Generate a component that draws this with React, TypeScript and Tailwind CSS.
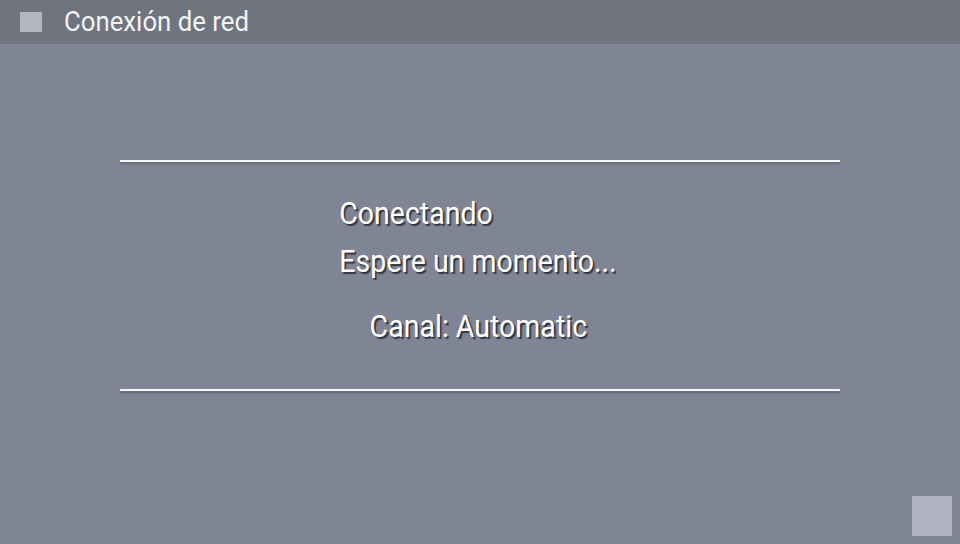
import React from 'react';

const shadow = { textShadow: '2px 2px 1px rgba(0,0,0,0.6)' };

function Rule() {
  return <div className="h-[2px] w-[720px] bg-[#f4f5f7] shadow-[0_2px_2px_rgba(0,0,0,0.25)]" />;
}

export default function App() {
  return (
    <div className="flex h-[544px] w-[960px] flex-col overflow-hidden bg-[#7f8595] font-['Roboto',sans-serif] text-white">
      <div className="flex h-[44px] shrink-0 items-center bg-[#6f747f] pl-5">
        <div className="h-5 w-[22px] bg-[#b4b7c0]" />
        <span className="ml-[22px] origin-left scale-x-[0.92] text-[28px] leading-none text-[#f2f3f5]">Conexión de red</span>
      </div>
      <div className="relative flex flex-1 flex-col items-center pt-[116px]">
        <Rule />
        <div className="mt-[28px] flex scale-x-[0.92] flex-col items-start pr-1 text-[31px] leading-[48px]" style={shadow}>
          <span>Conectando</span>
          <span>Espere un momento...</span>
        </div>
        <div className="mt-[17px] scale-x-[0.92] pr-1 text-[31px] leading-[48px]" style={shadow}>
          Canal: Automatic
        </div>
        <div className="mt-[38px]">
          <Rule />
        </div>
        <div className="absolute bottom-2 right-2 h-10 w-10 bg-[#b0b4c0]" />
      </div>
    </div>
  );
}
